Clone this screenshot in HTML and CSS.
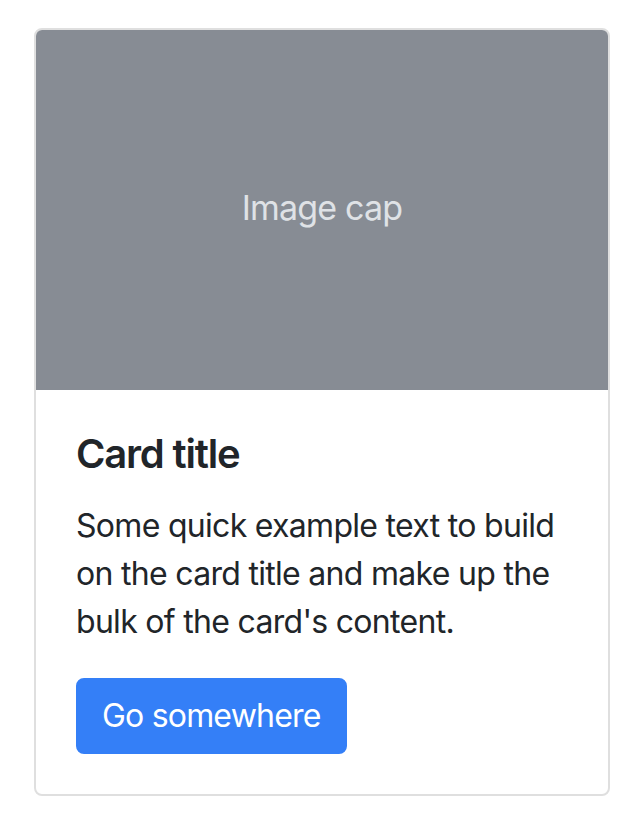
FILE: index.html
```html
<!DOCTYPE html>
<html lang="en">
<head>
<meta charset="utf-8">
<title>Card</title>
<link rel="stylesheet" href="styles.css">
</head>
<body>
<div class="card">
  <div class="card-img-top">
    <span class="img-label">Image cap</span>
  </div>
  <div class="card-body">
    <h5 class="card-title">Card title</h5>
    <p class="card-text">Some quick example text to build on the card title and make up the bulk of the card's content.</p>
    <a href="#" class="btn">Go somewhere</a>
  </div>
</div>
</body>
</html>
```
FILE: styles.css
```css
html, body {
  margin: 0;
  background: #fff;
}
body {
  padding: 28px 0 0 34px;
  font-family: Inter, "Noto Sans", sans-serif;
  font-size: 32px;
  line-height: 1.5;
  color: #212529;
}
.card {
  width: 576px;
  box-sizing: border-box;
  border: 2px solid #dfdfdf;
  border-radius: 8px;
  display: flex;
  flex-direction: column;
}
.card-img-top {
  height: 360px;
  background: #878c94;
  border-radius: 6px 6px 0 0;
  display: flex;
  align-items: center;
  justify-content: center;
}
.img-label {
  color: #dfe2e6;
  font-size: 34px;
  line-height: 1;
  letter-spacing: -0.8px;
  margin-top: -4px;
}
.card-title {
  margin: 0 0 24px;
  font-size: 40px;
  font-weight: 600;
  line-height: 1.2;
  letter-spacing: -1.2px;
}
.card-body {
  padding: 40px;
}
.card-text {
  margin: 0 0 32px;
  letter-spacing: -0.7px;
}
.btn {
  display: inline-block;
  padding: 12px 24px;
  border: 2px solid #347ff7;
  border-radius: 8px;
  background: #347ff7;
  color: #fff;
  text-decoration: none;
  line-height: 48px;
  letter-spacing: -0.8px;
}
```
